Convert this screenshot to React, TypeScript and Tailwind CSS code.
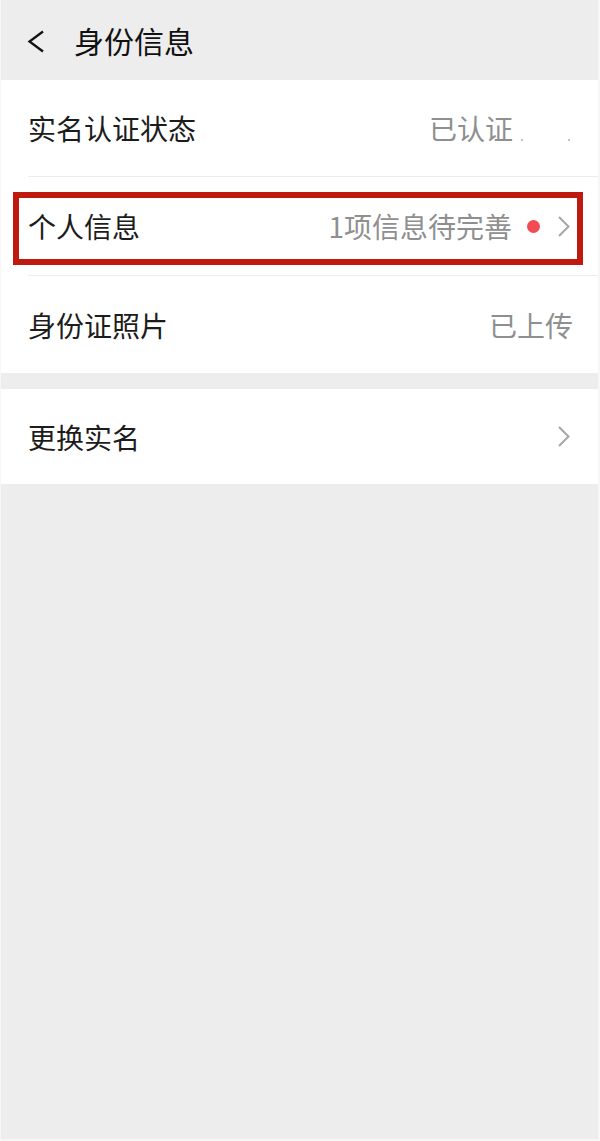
const font = { fontFamily: '"Noto Sans CJK SC", "Noto Sans", sans-serif' };

function Chevron() {
  return (
    <svg width="13" height="23" viewBox="0 0 13 23" className="shrink-0">
      <path d="M2 2 L11.5 11.5 L2 21" fill="none" stroke="#a6a6a6" strokeWidth="2" />
    </svg>
  );
}

function Row({
  label,
  children,
  divider = true,
}: {
  label: string;
  children?: React.ReactNode;
  divider?: boolean;
}) {
  return (
    <div className="relative bg-white">
      <div className="flex h-[97px] items-center justify-between pl-[27px] pr-[25px]">
        <span className="text-[28px] leading-none text-[#1c1c1c]">{label}</span>
        <div className="flex items-center">{children}</div>
      </div>
      {divider && <div className="ml-[27px] h-px bg-[#ececec]" />}
    </div>
  );
}

export default function App() {
  return (
    <div
      style={font}
      className="flex h-[1141px] w-[600px] flex-col overflow-hidden border-l border-r-2 border-b-2 border-[#f7f7f7] bg-[#ededed]"
    >
      <div className="flex h-[80px] shrink-0 items-center bg-[#ededed] pl-[26px]">
        <svg width="18" height="24" viewBox="0 0 18 24" className="mt-[4px]">
          <path d="M16 1.5 L2.5 11.5 L16 21.5" fill="none" stroke="#111" strokeWidth="2.3" />
        </svg>
        <span className="ml-[29px] text-[30px] leading-none text-[#111]">身份信息</span>
      </div>

      <div className="h-[96px] bg-white">
        <div className="flex h-[96px] items-center justify-between pl-[27px] pr-[28px]">
          <span className="text-[28px] leading-none text-[#1c1c1c]">实名认证状态</span>
          <div className="flex items-end">
            <span className="text-[28px] leading-none text-[#8f8f8f]">已认证</span>
            <span className="mb-[1px] ml-[8px] h-[2px] w-[2px] rounded-full bg-[#b0b0b0]" />
            <span className="mb-[1px] ml-[45px] h-[2px] w-[2px] rounded-full bg-[#b0b0b0]" />
          </div>
        </div>
      </div>
      <div className="h-px bg-white">
        <div className="ml-[27px] h-px bg-[#ececec]" />
      </div>

      <div className="relative bg-white">
        <div className="flex h-[98px] items-center justify-between pl-[27px] pr-[28px]">
          <span className="text-[28px] leading-none text-[#1c1c1c]">个人信息</span>
          <div className="flex items-center">
            <span className="text-[28px] leading-none text-[#8f8f8f]">1项信息待完善</span>
            <span className="ml-[15px] h-[13px] w-[13px] rounded-full bg-[#f24b53]" />
            <span className="ml-[17px]">
              <Chevron />
            </span>
          </div>
        </div>
        <div className="ml-[27px] h-px bg-[#ececec]" />
        <div className="pointer-events-none absolute left-[12px] top-[15px] h-[73px] w-[570px] border-[6px] border-[#bf1a10]" />
      </div>

      <Row label="身份证照片" divider={false}>
        <span className="text-[28px] leading-none text-[#8f8f8f]">已上传</span>
      </Row>

      <div className="h-[16px] shrink-0" />

      <div className="bg-white">
        <div className="flex h-[95px] items-center justify-between pl-[27px] pr-[28px]">
          <span className="text-[28px] leading-none text-[#1c1c1c]">更换实名</span>
          <Chevron />
        </div>
      </div>

      <div className="flex-1" />
    </div>
  );
}
